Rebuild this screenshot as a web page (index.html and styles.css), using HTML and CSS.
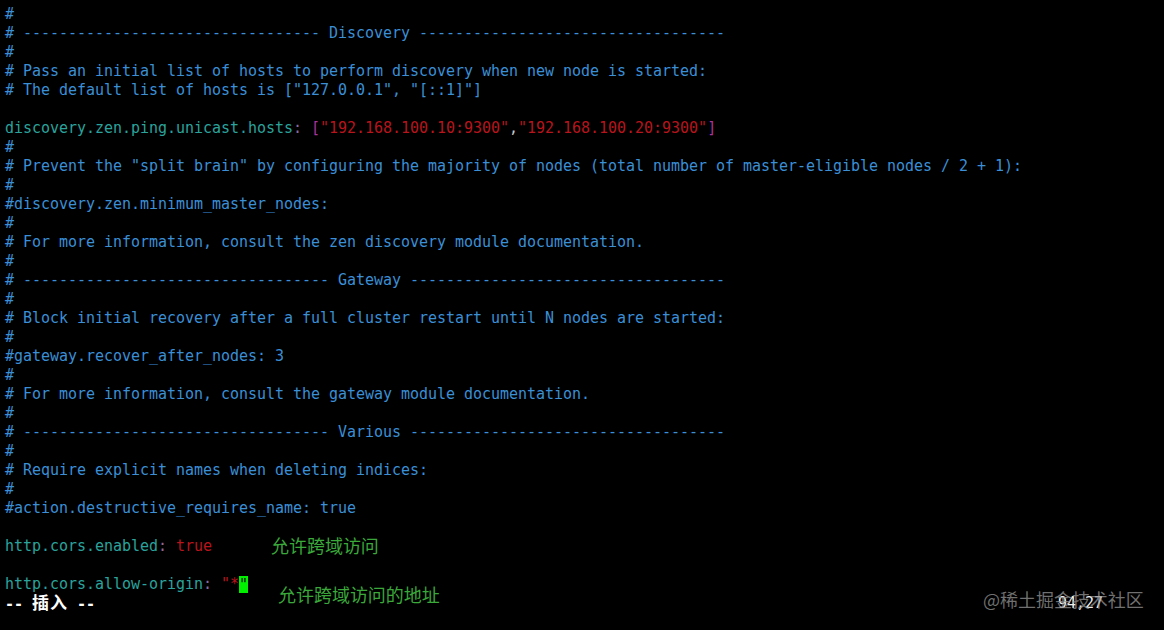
FILE: index.html
```html
<!DOCTYPE html>
<html lang="zh">
<head>
<meta charset="utf-8">
<link rel="stylesheet" href="styles.css">
</head>
<body>
<div class="term">
<div class="ln c">#</div>
<div class="ln c"># --------------------------------- Discovery ----------------------------------</div>
<div class="ln c">#</div>
<div class="ln c"># Pass an initial list of hosts to perform discovery when new node is started:</div>
<div class="ln c"># The default list of hosts is ["127.0.0.1", "[::1]"]</div>
<div class="ln"></div>
<div class="ln"><span class="k">discovery.zen.ping.unicast.hosts</span><span class="p">: </span><span class="b">[</span><span class="s">"192.168.100.10:9300"</span><span class="w">,</span><span class="s">"192.168.100.20:9300"</span><span class="b">]</span></div>
<div class="ln c">#</div>
<div class="ln c"># Prevent the "split brain" by configuring the majority of nodes (total number of master-eligible nodes / 2 + 1):</div>
<div class="ln c">#</div>
<div class="ln c">#discovery.zen.minimum_master_nodes:</div>
<div class="ln c">#</div>
<div class="ln c"># For more information, consult the zen discovery module documentation.</div>
<div class="ln c">#</div>
<div class="ln c"># ---------------------------------- Gateway -----------------------------------</div>
<div class="ln c">#</div>
<div class="ln c"># Block initial recovery after a full cluster restart until N nodes are started:</div>
<div class="ln c">#</div>
<div class="ln c">#gateway.recover_after_nodes: 3</div>
<div class="ln c">#</div>
<div class="ln c"># For more information, consult the gateway module documentation.</div>
<div class="ln c">#</div>
<div class="ln c"># ---------------------------------- Various -----------------------------------</div>
<div class="ln c">#</div>
<div class="ln c"># Require explicit names when deleting indices:</div>
<div class="ln c">#</div>
<div class="ln c">#action.destructive_requires_name: true</div>
<div class="ln"></div>
<div class="ln"><span class="k">http.cors.enabled</span><span class="p">: </span><span class="s">true</span></div>
<div class="ln"></div>
<div class="ln"><span class="k">http.cors.allow-origin</span><span class="p">: </span><span class="s">"*</span><span class="cur">"</span></div>
<div class="ln status"><span class="mode">-- <span class="cjk">插入</span> --</span><span class="ruler">94,27</span></div>
<div class="note note1">允许跨域访问</div>
<div class="note note2">允许跨域访问的地址</div>
<div class="wm">@稀土掘金技术社区</div>
</div>
</body>
</html>
```
FILE: styles.css
```css
html, body {
  margin: 0;
  padding: 0;
  background: #000;
}
.term {
  position: relative;
  width: 1164px;
  height: 630px;
  box-sizing: border-box;
  padding: 5px 0 0 5px;
  background: #000;
  color: #d0d0d0;
  font-family: "DejaVu Sans Mono", "Noto Sans CJK SC", monospace;
  font-size: 15px;
  letter-spacing: -0.03px;
  overflow: hidden;
}
.ln {
  height: 19px;
  line-height: 19px;
  white-space: pre;
}
.c { color: #3a8fd6; }
.k { color: #2aa39c; }
.p { color: #8a6a9a; }
.b { color: #a8329e; }
.s { color: #b8141c; }
.w { color: #c8c8c8; }
.cur {
  background: #00f000;
  color: #111;
  display: inline-block;
  height: 17px;
  line-height: 19px;
  vertical-align: top;
  margin-top: 1px;
}
.status {
  display: flex;
  color: #fff;
  font-weight: bold;
}
.mode {
  width: 1053px;
  line-height: 19px;
}
.cjk {
  font-family: "Noto Sans CJK SC", sans-serif;
  font-size: 17px;
  letter-spacing: 1px;
  line-height: 15px;
}
.ruler {
  font-weight: normal;
  color: #f0f0f0;
  line-height: 19px;
}
.note {
  position: absolute;
  font-family: "Noto Sans CJK SC", sans-serif;
  font-size: 18px;
  line-height: 24px;
  color: #3aa83a;
  white-space: nowrap;
}
.note1 { left: 271px; top: 533px; }
.note2 { left: 278px; top: 582px; }
.wm {
  position: absolute;
  left: 983px;
  top: 587px;
  font-family: "Noto Sans CJK SC", sans-serif;
  font-size: 18px;
  line-height: 24px;
  color: rgba(150, 150, 150, 0.75);
  white-space: nowrap;
}
```
